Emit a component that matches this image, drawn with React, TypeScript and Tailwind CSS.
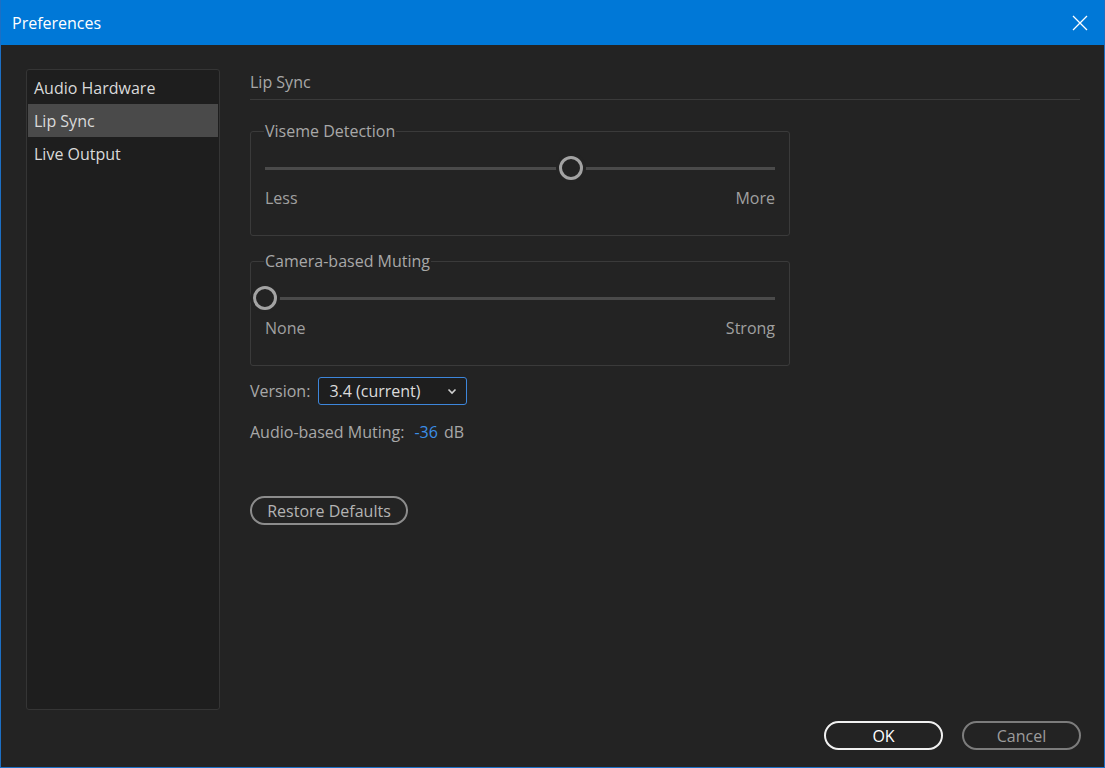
import React from 'react';

const NAV = ["Audio Hardware", "Lip Sync", "Live Output"];

function Slider({ value }: { value: number }) {
  return (
    <div className="relative h-[24px]">
      <div className="absolute left-0 right-0 top-[11px] h-[3px] bg-[#4a4a4a]" />
      <div
        className="absolute top-0 h-[24px] w-[24px] rounded-full border-[3px] border-[#a3a3a3] bg-[#232323] shadow-[0_0_0_3px_#232323]"
        style={{ left: `calc(${value}% - 12px)` }}
      />
    </div>
  );
}

function Group({ title, value, low, high }: { title: string; value: number; low: string; high: string }) {
  return (
    <fieldset className="h-[116px] w-[540px] rounded-[3px] border border-[#3a3a3a] px-[14px]">
      <legend className="ml-[-1px] px-[1px] text-[16px] leading-[22px] text-[#a8a8a8]">{title}</legend>
      <div className="mt-[14px]">
        <Slider value={value} />
      </div>
      <div className="mt-[7px] flex justify-between text-[16px] leading-[22px] text-[#a0a0a0]">
        <span>{low}</span>
        <span>{high}</span>
      </div>
    </fieldset>
  );
}

export default function App() {
  return (
    <div
      className="flex h-[768px] w-[1105px] flex-col overflow-hidden border-x border-b border-[#1c6fc4] bg-[#232323]"
      style={{ fontFamily: '"Open Sans", "Noto Sans", sans-serif' }}
    >
      {/* title bar */}
      <div className="mx-[-1px] flex h-[45px] shrink-0 items-center justify-between bg-[#0078d7] pl-[12px] pr-[16px]">
        <span className="text-[16px] text-white">Preferences</span>
        <svg width="18" height="18" viewBox="0 0 18 18" className="text-white">
          <path d="M2 2L16 16M16 2L2 16" stroke="currentColor" strokeWidth="1.3" fill="none" />
        </svg>
      </div>

      <div className="flex flex-1 flex-col">
        <div className="flex flex-1 pt-[24px]">
          {/* sidebar */}
          <div className="ml-[25px] h-[641px] w-[194px] rounded-[3px] border border-[#353535] bg-[#1e1e1e] p-px">
            {NAV.map((item) => (
              <div
                key={item}
                className={`flex h-[33px] items-center pl-[6px] text-[16px] text-[#dadada] ${
                  item === "Lip Sync" ? "bg-[#4a4a4a]" : ""
                }`}
              >
                {item}
              </div>
            ))}
          </div>

          {/* main */}
          <div className="ml-[30px] mr-[24px] flex flex-1 flex-col pt-[2px]">
            <div className="border-b border-[#3a3a3a] pb-[6px] text-[16px] leading-[22px] text-[#a8a8a8]">Lip Sync</div>

            <div className="mt-[20px] flex flex-col gap-[14px]">
              <Group title="Viseme Detection" value={60} low="Less" high="More" />
              <Group title="Camera-based Muting" value={0} low="None" high="Strong" />
            </div>

            <div className="mt-[11px] flex items-center gap-[8px]">
              <span className="text-[16px] text-[#a8a8a8]">Version:</span>
              <div className="flex h-[28px] w-[149px] items-center justify-between rounded-[3px] border border-[#3d86db] bg-[#1e1e1e] pl-[10px] pr-[8px] text-[16px] text-[#dcdcdc]">
                <span>3.4 (current)</span>
                <svg width="12" height="12" viewBox="0 0 12 12">
                  <path d="M2.5 4.5L6 8L9.5 4.5" stroke="#d0d0d0" strokeWidth="1.6" fill="none" />
                </svg>
              </div>
            </div>

            <div className="mt-[16px] flex items-center text-[16px] leading-[22px]">
              <span className="text-[#a8a8a8]">Audio-based Muting:</span>
              <span className="ml-[10px] text-[#3b8fe8]">-36</span>
              <span className="ml-[6px] text-[#a8a8a8]">dB</span>
            </div>

            <div className="mt-[53px]">
              <button className="h-[29px] w-[158px] rounded-full border-2 border-[#8c8c8c] text-[16px] text-[#b4b4b4]">
                Restore Defaults
              </button>
            </div>
          </div>
        </div>

        {/* footer */}
        <div className="flex justify-end gap-[19px] pb-[17px] pr-[23px] pt-[11px]">
          <button className="h-[29px] w-[119px] rounded-full border-2 border-[#f0f0f0] text-[16px] text-white">OK</button>
          <button className="h-[29px] w-[119px] rounded-full border-2 border-[#7c7c7c] text-[16px] text-[#9c9c9c]">Cancel</button>
        </div>
      </div>
    </div>
  );
}
